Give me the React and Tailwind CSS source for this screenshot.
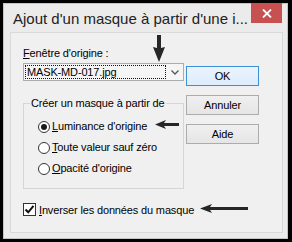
export default function App() {
  return (
    <div className="w-[292px] h-[242px] bg-black pt-[3px] pl-[3px] pr-[4px] pb-[3px] flex">
      <div className="flex-1 flex flex-col bg-[#ebebeb] border border-[#c4c4c4] font-['Liberation_Sans',Arial,sans-serif] text-black">
        {/* Title bar */}
        <div className="h-[28px] flex items-start justify-between">
          <div className="pl-[9px] pt-[6px] text-[15px] leading-[18px] text-[#222] whitespace-nowrap">
            Ajout d'un masque à partir d'une i...
          </div>
          <div className="-mt-px mr-[5px] w-[31px] h-[20px] bg-[#c75050] flex items-center justify-center">
            <svg width="10" height="9" viewBox="0 0 10 9">
              <path d="M1 0.5 L9 8.5 M9 0.5 L1 8.5" stroke="white" strokeWidth="1.8" />
            </svg>
          </div>
        </div>

        {/* Client area */}
        <div className="relative ml-[6px] mr-[4px] h-[201px] bg-[#f0f0f0] border border-[#d9d9d9] flex text-[11px] leading-[15px] tracking-[-0.15px]">
          {/* Left column */}
          <div className="pl-[12px] pt-[13px] w-[173px] flex flex-col">
            <div className="w-[161px]">
              <span className="underline">F</span>enêtre d'origine :
            </div>
            <div className="mt-[2px] h-[18px] w-[161px] border border-[#acacac] bg-[#f5f5f5] flex items-center pl-px">
              <div className="w-[141px] h-[14px] border border-dotted border-[#111] flex items-center pl-px">
                MASK-MD-017.jpg
              </div>
              <div className="flex-1 flex items-center justify-center">
                <svg width="8" height="5" viewBox="0 0 8 5">
                  <path d="M0.5 0.5 L4 4 L7.5 0.5" stroke="#555" strokeWidth="1.3" fill="none" />
                </svg>
              </div>
            </div>

            <fieldset className="mt-[15px] w-[161px] border border-[#d5d5d5] p-0 m-0">
              <legend className="ml-[6px] px-px leading-[15px]">Créer un masque à partir de</legend>
              <div className="pl-[14px] pt-[5px] pb-[9px] flex flex-col">
                <div className="h-[21px] flex items-center">
                  <div className="w-[12px] h-[12px] rounded-full border border-[#333] bg-white flex items-center justify-center">
                    <div className="w-[6px] h-[6px] rounded-full bg-[#1a1a1a]" />
                  </div>
                  <span className="ml-[2px]">
                    <span className="underline">L</span>uminance d'origine
                  </span>
                </div>
                <div className="h-[21px] flex items-center">
                  <div className="w-[12px] h-[12px] rounded-full border border-[#333] bg-white" />
                  <span className="ml-[2px]">
                    <span className="underline">T</span>oute valeur sauf zéro
                  </span>
                </div>
                <div className="h-[21px] flex items-center">
                  <div className="w-[12px] h-[12px] rounded-full border border-[#333] bg-white" />
                  <span className="ml-[2px]">
                    <span className="underline">O</span>pacité d'origine
                  </span>
                </div>
              </div>
            </fieldset>

            <div className="mt-[14px] flex items-start whitespace-nowrap">
              <div className="w-[13px] h-[13px] border border-[#333] bg-white flex items-center justify-center">
                <svg width="11" height="11" viewBox="0 0 11 11">
                  <path d="M1.5 5.5 L4.2 8.3 L9.5 1.8" stroke="#111" strokeWidth="2" fill="none" />
                </svg>
              </div>
              <span className="ml-[3px]">
                <span className="underline">I</span>nverser les données du masque
              </span>
            </div>
          </div>

          {/* Right column */}
          <div className="ml-[2px] pt-[33px] flex flex-col gap-[9px]">
            <div className="w-[73px] h-[20px] border border-[#3c8fd9] bg-linear-to-b from-[#ecf4fc] to-[#dcecfc] flex items-center justify-center">
              OK
            </div>
            <div className="w-[73px] h-[20px] border border-[#acacac] bg-linear-to-b from-[#f0f0f0] to-[#e5e5e5] flex items-center justify-center">
              Annuler
            </div>
            <div className="w-[73px] h-[20px] border border-[#acacac] bg-linear-to-b from-[#f0f0f0] to-[#e5e5e5] flex items-center justify-center">
              Aide
            </div>
          </div>

          {/* Annotation arrows */}
          <svg className="absolute left-[142px] top-[2px]" width="12" height="28" viewBox="0 0 12 28">
            <polygon points="4,0 8,0 8,13 12,12 6,27 0,12 4,13" fill="#262626" />
          </svg>
          <svg className="absolute left-[144px] top-[87px]" width="24" height="9" viewBox="0 0 24 9">
            <polygon points="0,4.5 11,0 9,3 24,3 24,6 9,6 11,9" fill="#262626" />
          </svg>
          <svg className="absolute left-[189px] top-[171px]" width="48" height="9" viewBox="0 0 48 9">
            <polygon points="0,4.5 12,0 10,3 48,3 48,6 10,6 12,9" fill="#262626" />
          </svg>
        </div>
      </div>
    </div>
  );
}
